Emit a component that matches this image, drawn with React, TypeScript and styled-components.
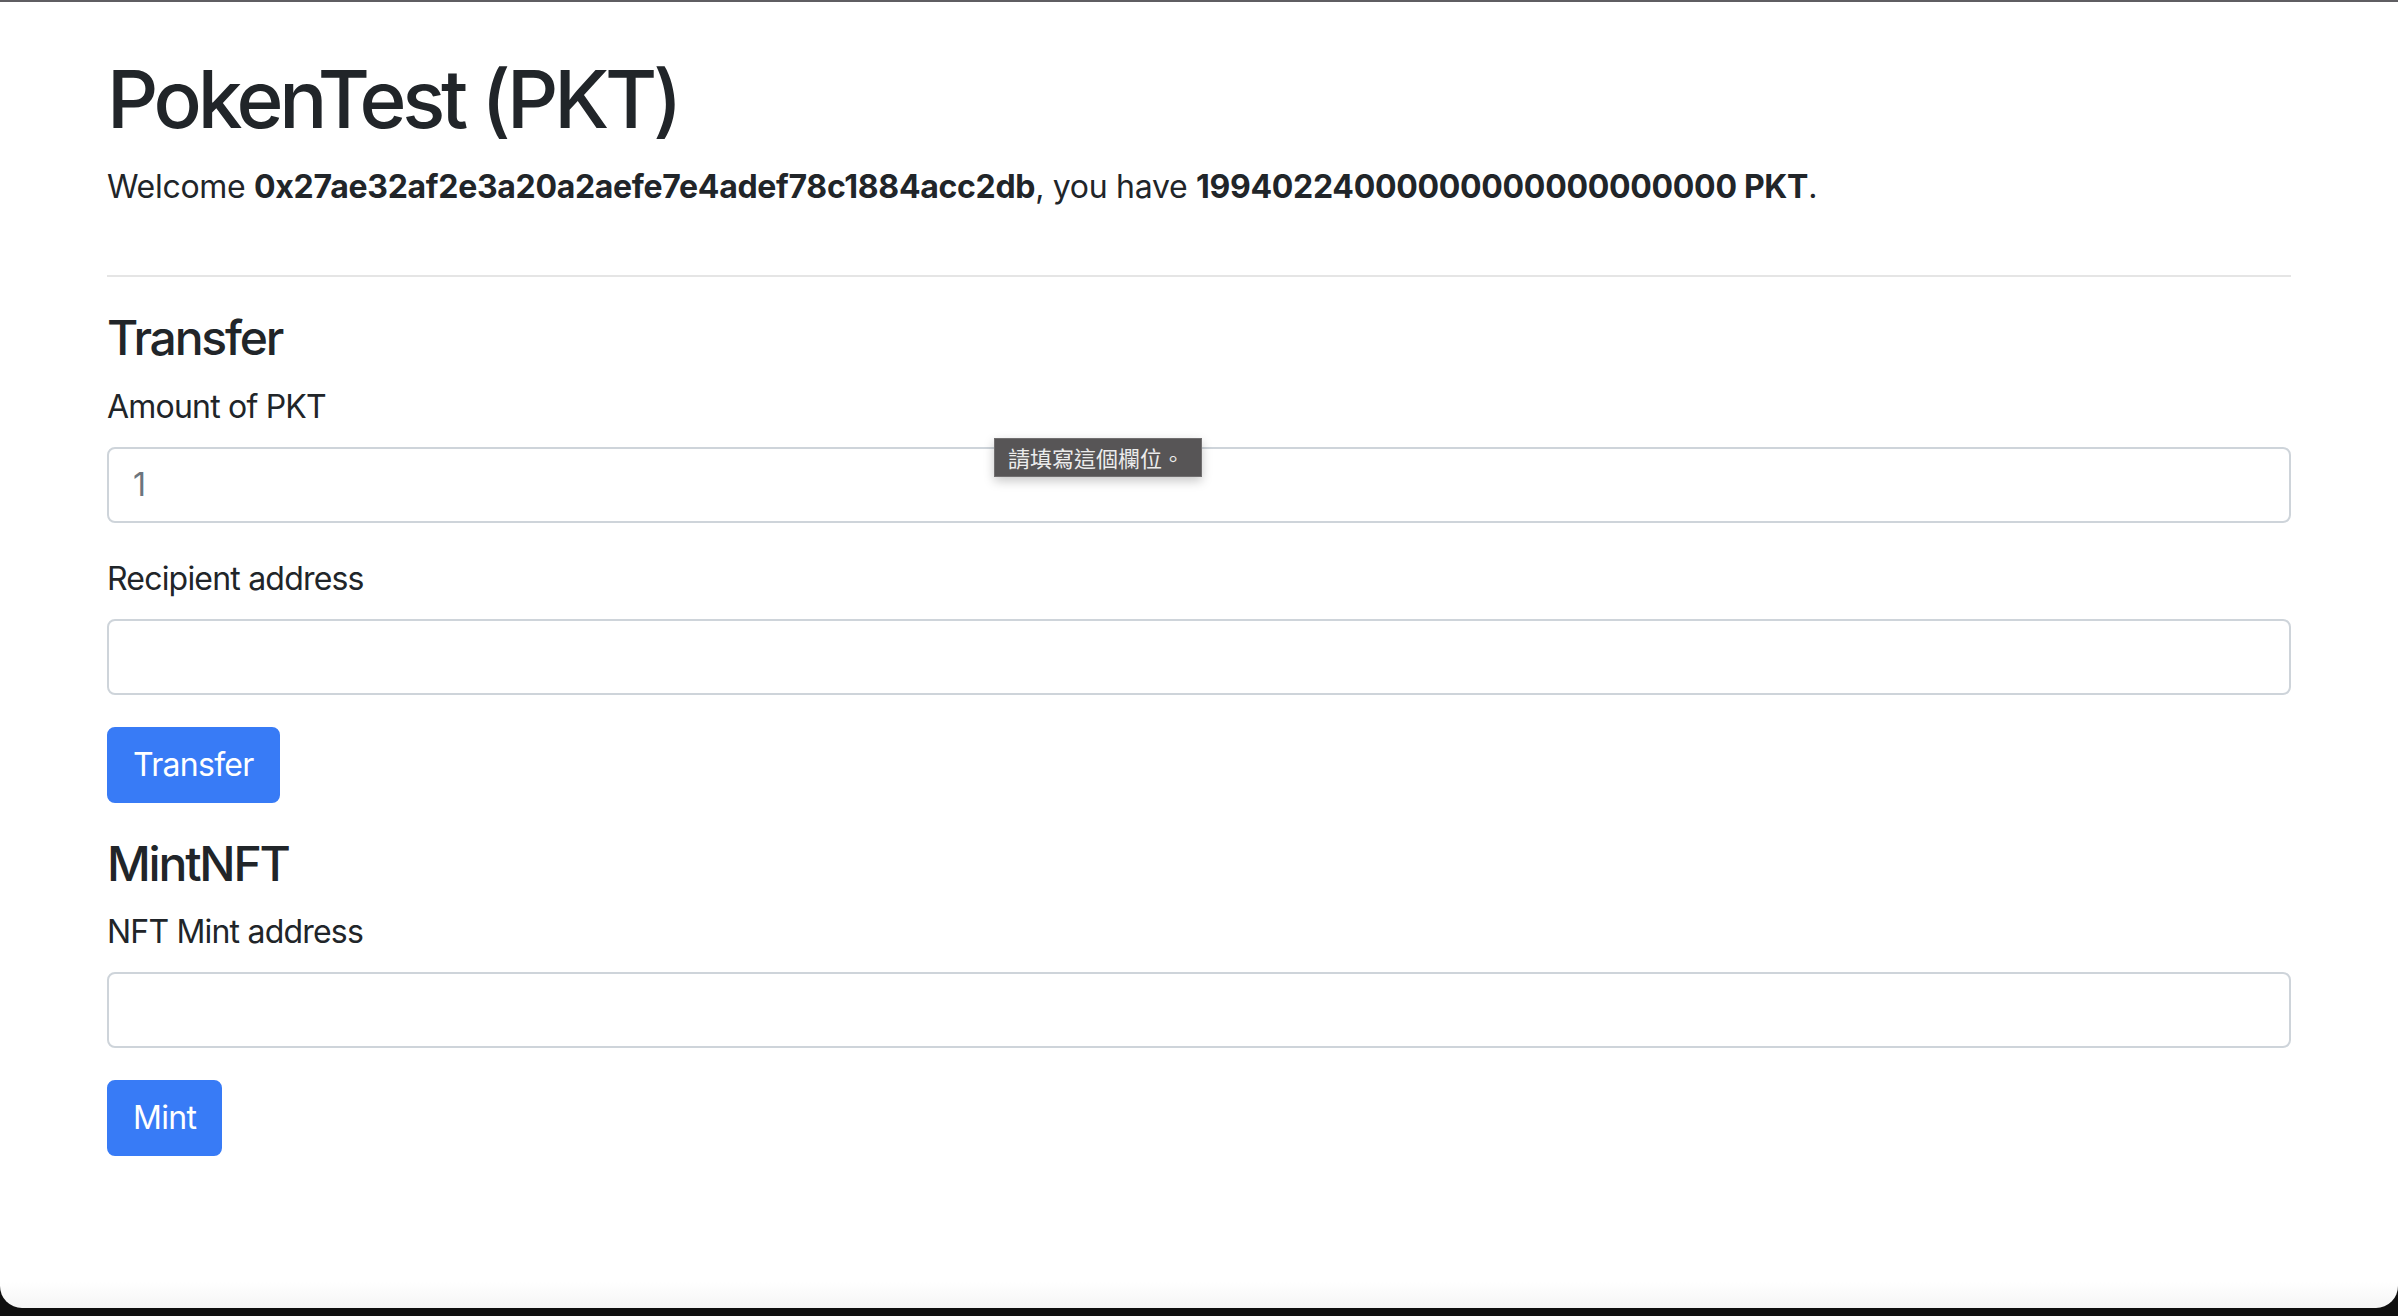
import React from "react";
import styled, { createGlobalStyle } from "styled-components";

const GlobalStyle = createGlobalStyle`
  html, body {
    margin: 0;
    padding: 0;
    background: #0f0f0f;
  }
  * { box-sizing: border-box; }
  body {
    font-family: Inter, "Noto Sans", "Liberation Sans", sans-serif;
    color: #212529;
  }
`;

const Frame = styled.div`
  height: 1308px;
  background: linear-gradient(to bottom, #ffffff calc(100% - 26px), #f5f5f5 100%);
  border-top: 2px solid #5f5e62;
  border-radius: 0 0 22px 22px;
  overflow: hidden;
`;

const Container = styled.main`
  width: 2184px;
  margin: 0 auto;
  padding-top: 49px;
`;

const Title = styled.h1`
  margin: 0 0 16px;
  font-size: 80px;
  font-weight: 500;
  line-height: 1.2;
  letter-spacing: -4.2px;
  color: #212529;
`;

const Welcome = styled.p`
  margin: 0;
  font-size: 32px;
  line-height: 48px;
  letter-spacing: -0.3px;

  b {
    font-weight: 700;
  }
`;

const Divider = styled.hr`
  margin: 64px 0 32px;
  border: 0;
  border-top: 2px solid #e5e5e5;
`;

const SectionTitle = styled.h4`
  margin: 0 0 16px;
  font-size: 48px;
  font-weight: 500;
  line-height: 1.2;
  letter-spacing: -2.2px;
`;

const Field = styled.div`
  position: relative;
  margin-bottom: 32px;
`;

const Label = styled.label`
  display: block;
  margin-bottom: 16px;
  font-size: 32px;
  line-height: 48px;
  letter-spacing: -0.8px;
`;

const Input = styled.input`
  display: block;
  width: 100%;
  height: 76px;
  padding: 12px 24px;
  font-family: inherit;
  font-size: 32px;
  line-height: 48px;
  color: #212529;
  background: #fff;
  border: 2px solid #ced4da;
  border-radius: 8px;
  outline: none;

  &::placeholder {
    color: #6c757d;
  }
`;

const Button = styled.button`
  display: inline-block;
  margin-bottom: 32px;
  padding: 12px 24px;
  font-family: inherit;
  font-size: 32px;
  line-height: 48px;
  font-weight: 400;
  letter-spacing: -0.7px;
  color: #fff;
  background: #387bf6;
  border: 2px solid #387bf6;
  border-radius: 8px;
  cursor: pointer;
`;

const Tooltip = styled.div`
  position: absolute;
  left: 887px;
  top: -9px;
  height: 39px;
  padding: 0 17px 0 13px;
  background: #575556;
  border: 1px solid #716f70;
  color: #ececec;
  font-family: "Noto Sans CJK TC", "Noto Sans CJK SC", sans-serif;
  font-size: 22px;
  line-height: 37px;
  white-space: nowrap;
  box-shadow: 0 4px 10px rgba(0, 0, 0, 0.22);
`;

export default function App() {
  return (
    <>
      <GlobalStyle />
      <Frame>
        <Container>
          <Title>PokenTest (PKT)</Title>
          <Welcome>
            Welcome <b>0x27ae32af2e3a20a2aefe7e4adef78c1884acc2db</b>, you have{" "}
            <b>19940224000000000000000000 PKT</b>.
          </Welcome>
          <Divider />

          <SectionTitle>Transfer</SectionTitle>
          <Label htmlFor="amount">Amount of PKT</Label>
          <Field>
            <Input id="amount" type="text" placeholder="1" />
            <Tooltip>請填寫這個欄位。</Tooltip>
          </Field>
          <Label htmlFor="recipient">Recipient address</Label>
          <Field>
            <Input id="recipient" type="text" />
          </Field>
          <Button type="button">Transfer</Button>

          <SectionTitle>MintNFT</SectionTitle>
          <Label htmlFor="mint">NFT Mint address</Label>
          <Field>
            <Input id="mint" type="text" />
          </Field>
          <Button type="button">Mint</Button>
        </Container>
      </Frame>
    </>
  );
}
